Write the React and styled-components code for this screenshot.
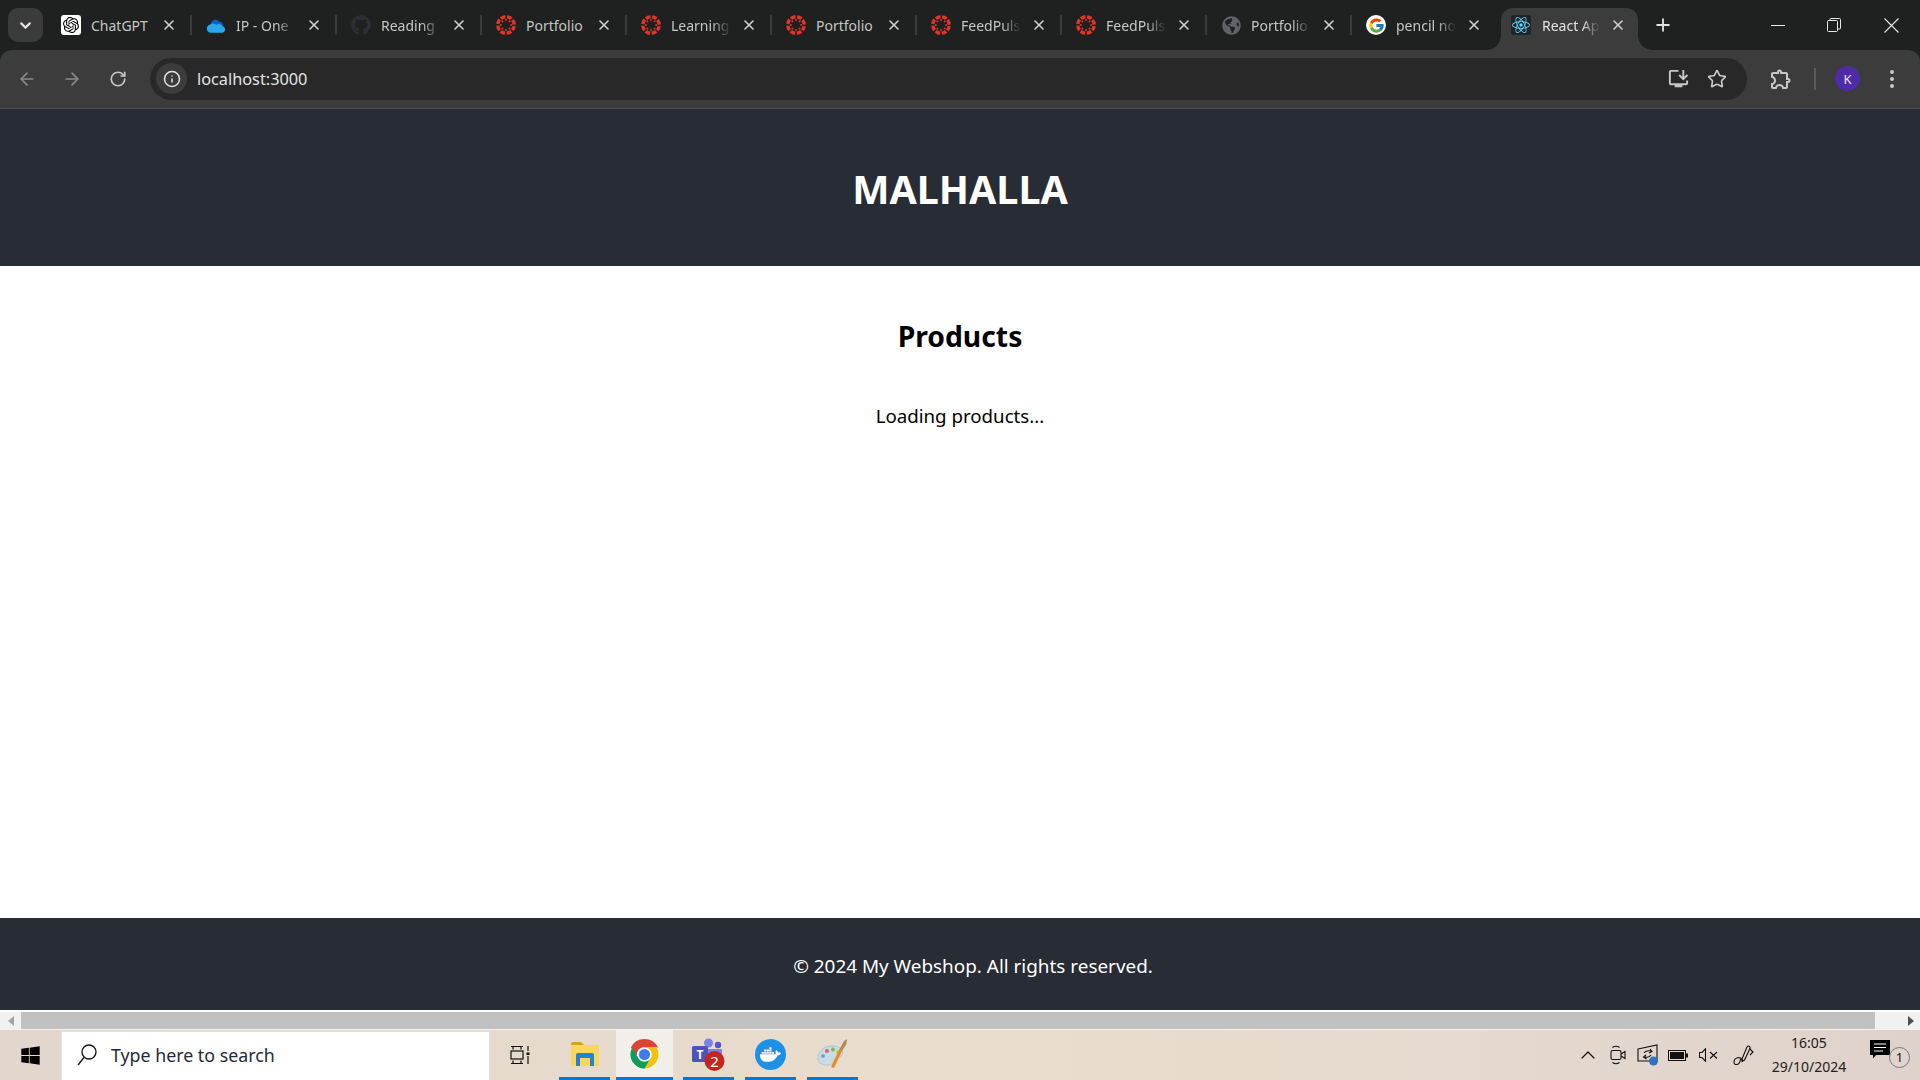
import React from 'react';
import styled, { createGlobalStyle } from 'styled-components';
import { ArrowLeft, ArrowRight, RotateCw, Info, Star, ChevronDown, ChevronUp, X, Plus } from 'lucide-react';
import { SiOpenai, SiReact } from 'react-icons/si';
import { FaGithub, FaDocker, FaWindows, FaGlobeAmericas } from 'react-icons/fa';
import { FcGoogle } from 'react-icons/fc';
import { MdInstallDesktop, MdOutlineExtension } from 'react-icons/md';

const UI_FONT = '"Noto Sans", "Open Sans", sans-serif';

const GlobalStyle = createGlobalStyle`
  html, body { margin: 0; height: 100%; overflow: hidden; background: #fff; }
  * { box-sizing: border-box; }
  body { font-family: ${UI_FONT}; }
`;

const Screen = styled.div`
  display: flex;
  flex-direction: column;
  width: 100%;
  height: 100vh;
`;

const BrowserFrame = styled.div`
  flex: none;
  background: #1f2120;
`;

/* browser tab strip */
const TabStrip = styled.div`
  display: flex;
  height: 50px;
`;

const TabSearch = styled.button`
  width: 35px;
  height: 34px;
  margin: 8px 4px 0 8px;
  padding: 0;
  border: 0;
  border-radius: 10px;
  background: #3b3b3b;
  color: #e3e3e3;
  display: flex;
  align-items: center;
  justify-content: center;
`;

const TabItem = styled.div`
  position: relative;
  flex: none;
  display: flex;
  align-items: center;
  width: ${p => (p.$active ? '137px' : '145px')};
  margin: ${p => (p.$active ? '8px 4px 0' : '0')};
  padding: ${p => (p.$active ? '0 0 8px 10px' : '0 0 0 14px')};
  background: ${p => (p.$active ? '#3c3c3c' : 'transparent')};
  border-radius: 12px 12px 0 0;

  ${p => p.$sep && `
    &::after {
      content: '';
      position: absolute;
      right: 0;
      top: 15px;
      width: 2px;
      height: 20px;
      background: #3a3c3b;
    }
  `}

  ${p => p.$active && `
    &::before, &::after {
      content: '';
      position: absolute;
      bottom: 0;
      width: 14px;
      height: 14px;
    }
    &::before {
      left: -14px;
      background: radial-gradient(circle at 0 0, transparent 13.5px, #3c3c3c 14px);
    }
    &::after {
      right: -14px;
      background: radial-gradient(circle at 100% 0, transparent 13.5px, #3c3c3c 14px);
    }
  `}
`;

const Favicon = styled.span`
  flex: none;
  width: 20px;
  height: 20px;
  display: flex;
  align-items: center;
  justify-content: center;
  border-radius: ${p => (p.$round ? '50%' : '3px')};
  background: ${p => p.$bg || 'transparent'};
  color: ${p => p.$fg || 'inherit'};
`;

const TabTitle = styled.span`
  flex: none;
  width: ${p => (p.$active ? '58px' : '60px')};
  margin-left: ${p => (p.$active ? '11px' : '10px')};
  white-space: nowrap;
  font-size: 14px;
  color: ${p => (p.$active ? '#e3e3e3' : '#c4c7c5')};
  ${p => p.$fade && `
    overflow: hidden;
    -webkit-mask-image: linear-gradient(to right, #000 68%, transparent 100%);
    mask-image: linear-gradient(to right, #000 68%, transparent 100%);
  `}
`;

const TabClose = styled.span`
  flex: none;
  margin-left: 10px;
  width: 16px;
  height: 16px;
  display: flex;
  align-items: center;
  justify-content: center;
  color: #d0d0d0;
`;

const NewTab = styled.span`
  width: 20px;
  height: 20px;
  margin: 15px 0 0 11px;
  color: #e3e3e3;
  display: flex;
  align-items: center;
  justify-content: center;
`;

const WindowControls = styled.div`
  margin-left: auto;
  display: flex;
`;

const WindowBtn = styled.span`
  width: ${p => p.$w}px;
  height: 50px;
  display: flex;
  align-items: center;
  justify-content: center;
`;

/* browser toolbar */
const Toolbar = styled.div`
  display: flex;
  align-items: center;
  height: 59px;
  padding: 0 0 1px 4px;
  background: #3c3c3c;
  border-bottom: 1px solid #4a4a4a;
  border-radius: 12px 12px 0 0;
`;

const NavBtn = styled.span`
  flex: none;
  width: 45.5px;
  display: flex;
  justify-content: center;
  color: ${p => (p.$off ? '#8a8a8a' : '#c7c7c7')};
`;

const Omnibox = styled.div`
  flex: none;
  display: flex;
  align-items: center;
  width: 1597px;
  height: 42px;
  margin-left: 9.5px;
  padding: 0 20px 0 6px;
  border-radius: 21px;
  background: #282828;
`;

const InfoChip = styled.span`
  width: 31px;
  height: 31px;
  border-radius: 50%;
  background: #3c3c3c;
  color: #e3e3e3;
  display: flex;
  align-items: center;
  justify-content: center;
`;

const UrlText = styled.span`
  margin-left: 10px;
  font-size: 16.3px;
  color: #e3e3e3;
`;

const OmniActions = styled.div`
  margin-left: auto;
  display: flex;
  align-items: center;
  gap: 17px;
  color: #c7c7c7;
`;

const ToolbarEnd = styled.div`
  display: flex;
  align-items: center;
  color: #c7c7c7;
  margin-left: 22px;
`;

const ToolbarSep = styled.span`
  width: 2px;
  height: 22px;
  margin: 0 19px 0 21px;
  background: #5a5a5a;
`;

const Avatar = styled.span`
  width: 25px;
  height: 25px;
  border-radius: 50%;
  background: #4f2ba8;
  color: #e8e3f5;
  font-size: 13px;
  display: flex;
  align-items: center;
  justify-content: center;
`;

const MenuDots = styled.span`
  display: flex;
  flex-direction: column;
  gap: 3px;
  margin-left: 30px;

  i {
    display: block;
    width: 4px;
    height: 4px;
    border-radius: 50%;
    background: #c7c7c7;
  }
`;

/* the page in the browser */
const Page = styled.div`
  flex: 1;
  display: flex;
  flex-direction: column;
  min-height: 0;
  text-align: center;
  background: #fff;
`;

const Header = styled.header`
  flex: none;
  height: 157px;
  padding-top: 52px;
  background: #282c34;
  color: #fff;
`;

const Title = styled.h1`
  margin: 0;
  font-size: 39.5px;
  line-height: 56px;
  font-weight: 700;
`;

const Main = styled.main`
  flex: 1;
  padding-top: 50px;
  color: #000;
`;

const SectionTitle = styled.h2`
  margin: 0 0 46px;
  font-size: 28.3px;
  line-height: 40px;
  font-weight: 700;
`;

const Status = styled.p`
  margin: 0;
  font-size: 18.7px;
  line-height: 28px;
`;

const Footer = styled.footer`
  flex: none;
  height: 92px;
  padding: 34px 0 0 26px;
  background: #282c34;
  color: #fff;
  font-size: 18.9px;
  line-height: 28px;
`;

/* horizontal page scrollbar */
const Scrollbar = styled.div`
  flex: none;
  display: flex;
  height: 20px;
  border-top: 2px solid #fff;
  background: #f1f1f1;
  border-bottom: 1px solid #f4f4f4;
`;

const ScrollArrow = styled.span`
  flex: none;
  width: ${p => p.$w}px;
  display: flex;
  align-items: center;
  justify-content: ${p => (p.$right ? 'flex-end' : 'center')};
  padding-right: ${p => (p.$right ? '6px' : '0')};
`;

const ScrollThumb = styled.span`
  flex: 1;
  background: #c1c1c1;
`;

/* windows taskbar */
const Taskbar = styled.div`
  flex: none;
  display: flex;
  align-items: stretch;
  height: 50px;
  background: linear-gradient(90deg, #e2d6cd 0%, #e6dacd 30%, #eaddcc 50%, #e6d9cf 75%, #dfd2ca 100%);
`;

const StartBtn = styled.span`
  flex: none;
  width: 61px;
  display: flex;
  align-items: center;
  justify-content: center;
  color: #000;
`;

const SearchBox = styled.div`
  flex: none;
  display: flex;
  align-items: center;
  width: 429px;
  height: 49px;
  margin-top: 1px;
  padding: 0 0 2px 14px;
  background: #fff;
  border: 1px solid #e4e0dc;
  border-bottom: 0;
`;

const SearchText = styled.span`
  margin-left: 13px;
  font-size: 17.8px;
  color: #1f2a3a;
`;

const TaskViewBtn = styled.span`
  flex: none;
  width: 69px;
  padding-right: 10px;
  display: flex;
  align-items: center;
  justify-content: center;
`;

const TaskApp = styled.span`
  flex: none;
  width: ${p => p.$w}px;
  margin-right: ${p => p.$gap}px;
  display: flex;
  align-items: center;
  justify-content: center;
  padding-top: 1px;
  background: ${p => (p.$focus ? '#f2eeea' : 'transparent')};
  border-bottom: 3px solid #0078d4;
`;

const Tray = styled.div`
  margin-left: auto;
  display: flex;
  align-items: center;
`;

const TrayIcon = styled.span`
  flex: none;
  width: ${p => p.$w}px;
  display: flex;
  justify-content: center;
  color: #111;
`;

const Clock = styled.div`
  flex: none;
  width: 92px;
  text-align: center;
  font-size: 14px;
  line-height: 24px;
  color: #222;
`;

const ActionCenter = styled.span`
  position: relative;
  flex: none;
  width: 50px;
  height: 30px;
  margin-left: 15px;
`;

const ActionBadge = styled.span`
  position: absolute;
  left: 19px;
  top: 7px;
  width: 21px;
  height: 21px;
  border-radius: 50%;
  border: 1px solid #777;
  background: rgba(224, 214, 206, 0.8);
  color: #111;
  font-size: 13px;
  line-height: 19px;
  text-align: center;
`;

function CanvasLogo() {
  const inner = [0, 45, 90, 135, 180, 225, 270, 315];
  return (
    <svg width="20" height="20" viewBox="0 0 20 20">
      <circle cx="10" cy="10" r="8.2" fill="none" stroke="#e3342a" strokeWidth="3.4" strokeDasharray="4.9 1.54" strokeDashoffset="2.45" transform="rotate(22.5 10 10)" />
      {inner.map(a => (
        <circle key={a} cx="10" cy="4.9" r="1" fill="#e3342a" transform={`rotate(${a} 10 10)`} />
      ))}
    </svg>
  );
}

function OneDriveLogo() {
  return (
    <svg width="21" height="15" viewBox="0 0 21 15">
      <path d="M5 6.5 A5 5 0 0 1 14 3.6 A4 4 0 0 1 18 8 L8 9 Z" fill="#0a62c4" />
      <path d="M4.5 15 A4.2 4.2 0 0 1 4 6.8 A5 5 0 0 1 11 7 A3.6 3.6 0 0 1 17 8 A3.6 3.6 0 0 1 17.5 15 Z" fill="#28a8ea" />
    </svg>
  );
}

function MinimizeIcon() {
  return <svg width="14" height="14" viewBox="0 0 14 14"><path d="M0 7.5H14" stroke="#e8e8e8" strokeWidth="1" /></svg>;
}

function RestoreIcon() {
  return (
    <svg width="14" height="14" viewBox="0 0 14 14" fill="none" stroke="#e8e8e8" strokeWidth="1">
      <rect x="0.5" y="2.5" width="10" height="11" rx="1" />
      <path d="M3 2.5V1.5Q3 .5 4 .5H12.5Q13.5 .5 13.5 1.5V10Q13.5 11 12.5 11H10.5" />
    </svg>
  );
}

function CloseIcon() {
  return <svg width="15" height="15" viewBox="0 0 15 15"><path d="M.5 .5L14.5 14.5M14.5 .5L.5 14.5" stroke="#e8e8e8" strokeWidth="1.1" /></svg>;
}

function TaskViewIcon() {
  return (
    <svg width="20" height="20" viewBox="0 0 20 20" fill="none" stroke="#111" strokeWidth="1.2">
      <path d="M1 1.5H13M3 1.5V4.5M11 1.5V4.5" />
      <rect x="1" y="6" width="12" height="8" />
      <path d="M1 18.5H13M3 15.5V18.5M11 15.5V18.5M18 1V6M18 11V19" />
      <rect x="16.5" y="7.5" width="3" height="2.5" fill="#111" stroke="none" />
    </svg>
  );
}

function ExplorerIcon() {
  return (
    <svg width="28" height="24" viewBox="0 0 28 24">
      <path d="M0 2Q0 0 2 0H10L13 3H0Z" fill="#d9a214" />
      <rect x="0" y="3" width="28" height="21" rx="1.5" fill="#fbd55f" />
      <path d="M5 13Q5 11 7 11H21Q23 11 23 13V24H19V16H9V24H5Z" fill="#1c87cf" />
    </svg>
  );
}

function ChromeIcon() {
  const seg = 'M43.05 13A22 22 0 0 0 4.95 13L14.47 29.5A11 11 0 0 1 24 13Z';
  return (
    <svg width="31" height="31" viewBox="0 0 48 48">
      <circle cx="24" cy="24" r="23" fill="#fff" />
      <path d="M45 13A23.5 23.5 0 0 0 3 13L14 30A11 11 0 0 1 24 13Z" fill="#db4437" />
      <path d={seg} fill="#f4c20d" transform="rotate(120 24 24)" />
      <path d={seg} fill="#0f9d58" transform="rotate(240 24 24)" />
      <circle cx="24" cy="24" r="11" fill="#fff" />
      <circle cx="24" cy="24" r="8.6" fill="#3a7df0" />
    </svg>
  );
}

function TeamsIcon() {
  return (
    <svg width="34" height="33" viewBox="0 0 34 33">
      <circle cx="16.5" cy="5" r="4.5" fill="#7b83eb" />
      <circle cx="26" cy="7" r="3.2" fill="#5059c9" />
      <path d="M13 11H30V19Q30 26 22 26Q13 26 13 19Z" fill="#7b83eb" />
      <rect x="0" y="8" width="16" height="16" rx="1.5" fill="#4b53bc" />
      <text x="8" y="20.5" textAnchor="middle" fontSize="12" fontWeight="700" fill="#fff" fontFamily="Noto Sans, sans-serif">T</text>
      <circle cx="22.5" cy="23" r="10" fill="#c4261d" />
      <text x="22.5" y="28.5" textAnchor="middle" fontSize="15" fill="#fff" fontFamily="Noto Sans, sans-serif">2</text>
    </svg>
  );
}

function DockerIcon() {
  return (
    <svg width="31" height="31" viewBox="0 0 31 31">
      <circle cx="15.5" cy="15.5" r="15.5" fill="#1d91e6" />
      <FaDocker x="5" y="5" size={21} color="#fff" />
    </svg>
  );
}

function PaletteIcon() {
  return (
    <svg width="32" height="32" viewBox="0 0 32 32">
      <path d="M1 20C1 12 9 7 17 8C24 9 27 13 25 17C23 21 18 19 17 22C16 26 13 28 8 27C3 26 1 24 1 20Z" fill="#c9dbe4" stroke="#9fb4c0" strokeWidth=".6" />
      <circle cx="6" cy="18" r="2" fill="#6ca6d8" />
      <circle cx="10" cy="13" r="2" fill="#d9635a" />
      <circle cx="16" cy="11.5" r="2" fill="#7cb95a" />
      <circle cx="21" cy="14" r="2" fill="#e6b93c" />
      <path d="M14 29L22 12L25 13L17 30Z" fill="#e88a1e" />
      <path d="M22 12L27 3L30 1L29.5 6L25 13Z" fill="#b58a55" />
    </svg>
  );
}

function CameraTray() {
  return (
    <svg width="16" height="20" viewBox="0 0 16 20" fill="none" stroke="#111" strokeWidth="1.1">
      <path d="M2.5 2.5Q6 0 9.5 2.5M2.5 17.5Q6 20 9.5 17.5" />
      <rect x="1" y="5.5" width="10" height="9" rx="1.5" />
      <path d="M11 9L15 6.5V13.5L11 11" />
    </svg>
  );
}

function SyncTray() {
  return (
    <svg width="22" height="22" viewBox="0 0 22 22">
      <path d="M1 5L20 1V17H1Z" fill="none" stroke="#111" strokeWidth="1.1" />
      <path d="M7 9Q9 6 14 7M13 5L15 7.5L12 9M14 11Q12 14 8 13M9 11L6.5 13L9.5 15" fill="none" stroke="#111" strokeWidth="1.1" />
      <circle cx="16.5" cy="17" r="4.5" fill="#2f74c0" />
    </svg>
  );
}

function BatteryTray() {
  return (
    <svg width="20" height="11" viewBox="0 0 20 11">
      <rect x=".5" y=".5" width="17" height="10" fill="none" stroke="#111" />
      <rect x="2" y="2" width="14" height="7" fill="#111" />
      <rect x="18" y="3.5" width="2" height="4" fill="#111" />
    </svg>
  );
}

function SpeakerTray() {
  return (
    <svg width="19" height="14" viewBox="0 0 19 14" fill="none" stroke="#111" strokeWidth="1.1">
      <path d="M.5 4.5H3L6.5 .8V13.2L3 9.5H.5Z" />
      <path d="M11 4L18 10.5M18 4L11 10.5" />
    </svg>
  );
}

function PenTray() {
  return (
    <svg width="21" height="21" viewBox="0 0 21 21" fill="none" stroke="#111" strokeWidth="1.1">
      <path d="M9 14L14 2Q15 .5 16.3 1.3Q17.5 2 17 3.5L11.5 15L9 16.5Z" />
      <path d="M16.5 3.5L20 7L17 10" />
      <path d="M9.5 16C8 10 1 13 1 17Q1 20 4 19.5Q7 19 7.5 14" />
    </svg>
  );
}

function NotifyGlyph() {
  return (
    <svg width="20" height="19" viewBox="0 0 20 19">
      <path d="M0 0H20V15H6L3 18.5V15H0Z" fill="#000" />
      <path d="M4 4H16M4 7.5H16M4 11H13" stroke="#fff" strokeWidth="1" />
    </svg>
  );
}

const tabs = [
  { title: 'ChatGPT', icon: <Favicon $bg="#fff" $fg="#000"><SiOpenai size={16} /></Favicon> },
  { title: 'IP - One', fade: true, icon: <Favicon><OneDriveLogo /></Favicon> },
  { title: 'Reading', fade: true, icon: <Favicon $fg="#2b3036"><FaGithub size={20} /></Favicon> },
  { title: 'Portfolio', icon: <Favicon><CanvasLogo /></Favicon> },
  { title: 'Learning', fade: true, icon: <Favicon><CanvasLogo /></Favicon> },
  { title: 'Portfolio', icon: <Favicon><CanvasLogo /></Favicon> },
  { title: 'FeedPuls', fade: true, icon: <Favicon><CanvasLogo /></Favicon> },
  { title: 'FeedPuls', fade: true, icon: <Favicon><CanvasLogo /></Favicon> },
  { title: 'Portfolio', fade: true, icon: <Favicon $fg="#5f6368"><FaGlobeAmericas size={19} /></Favicon> },
  { title: 'pencil no', fade: true, icon: <Favicon $bg="#fff" $round><FcGoogle size={17} /></Favicon> },
  { title: 'React Ap', fade: true, active: true, icon: <Favicon $bg="#20232a" $fg="#61dafb"><SiReact size={18} /></Favicon> },
];

const taskApps = [
  { w: 51, gap: 6, icon: <ExplorerIcon /> },
  { w: 57, gap: 10, focus: true, icon: <ChromeIcon /> },
  { w: 51, gap: 11, icon: <TeamsIcon /> },
  { w: 51, gap: 11, icon: <DockerIcon /> },
  { w: 51, gap: 0, icon: <PaletteIcon /> },
];

export default function App() {
  return (
    <Screen>
      <GlobalStyle />
      <BrowserFrame>
        <TabStrip>
          <TabSearch><ChevronDown size={17} strokeWidth={3} /></TabSearch>
          {tabs.map((t, i) => (
            <TabItem key={i} $active={t.active} $sep={!t.active && i < 9}>
              {t.icon}
              <TabTitle $active={t.active} $fade={t.fade}>{t.title}</TabTitle>
              <TabClose><X size={16} strokeWidth={2.4} /></TabClose>
            </TabItem>
          ))}
          <NewTab><Plus size={20} strokeWidth={2.2} /></NewTab>
          <WindowControls>
            <WindowBtn $w={56}><MinimizeIcon /></WindowBtn>
            <WindowBtn $w={56}><RestoreIcon /></WindowBtn>
            <WindowBtn $w={58}><CloseIcon /></WindowBtn>
          </WindowControls>
        </TabStrip>

        <Toolbar>
          <NavBtn $off><ArrowLeft size={20} /></NavBtn>
          <NavBtn $off><ArrowRight size={20} /></NavBtn>
          <NavBtn><RotateCw size={18} strokeWidth={2.2} /></NavBtn>
          <Omnibox>
            <InfoChip><Info size={18} /></InfoChip>
            <UrlText>localhost:3000</UrlText>
            <OmniActions>
              <MdInstallDesktop size={23} />
              <Star size={20} />
            </OmniActions>
          </Omnibox>
          <ToolbarEnd>
            <MdOutlineExtension size={24} />
            <ToolbarSep />
            <Avatar>K</Avatar>
            <MenuDots><i /><i /><i /></MenuDots>
          </ToolbarEnd>
        </Toolbar>
      </BrowserFrame>

      <Page>
        <Header><Title>MALHALLA</Title></Header>
        <Main>
          <SectionTitle>Products</SectionTitle>
          <Status>Loading products...</Status>
        </Main>
        <Footer>© 2024 My Webshop. All rights reserved.</Footer>
      </Page>

      <Scrollbar>
        <ScrollArrow $w={21}>
          <svg width="6" height="10" viewBox="0 0 6 10"><path d="M6 0V10L0 5Z" fill="#a3a3a3" /></svg>
        </ScrollArrow>
        <ScrollThumb />
        <ScrollArrow $w={45} $right>
          <svg width="6" height="10" viewBox="0 0 6 10"><path d="M0 0V10L6 5Z" fill="#505050" /></svg>
        </ScrollArrow>
      </Scrollbar>

      <Taskbar>
        <StartBtn><FaWindows size={21} /></StartBtn>
        <SearchBox>
          <svg width="22" height="24" viewBox="0 0 22 24" fill="none" stroke="#111" strokeWidth="1.3">
            <circle cx="13" cy="9" r="7" />
            <path d="M8 14.5L2 22" />
          </svg>
          <SearchText>Type here to search</SearchText>
        </SearchBox>
        <TaskViewBtn><TaskViewIcon /></TaskViewBtn>
        {taskApps.map((a, i) => (
          <TaskApp key={i} $w={a.w} $gap={a.gap} $focus={a.focus}>{a.icon}</TaskApp>
        ))}
        <Tray>
          <TrayIcon $w={30}><ChevronUp size={24} strokeWidth={1.2} /></TrayIcon>
          <TrayIcon $w={30}><CameraTray /></TrayIcon>
          <TrayIcon $w={30}><SyncTray /></TrayIcon>
          <TrayIcon $w={30}><BatteryTray /></TrayIcon>
          <TrayIcon $w={30}><SpeakerTray /></TrayIcon>
          <TrayIcon $w={40}><PenTray /></TrayIcon>
          <Clock>16:05<br />29/10/2024</Clock>
          <ActionCenter>
            <NotifyGlyph />
            <ActionBadge>1</ActionBadge>
          </ActionCenter>
        </Tray>
      </Taskbar>
    </Screen>
  );
}
